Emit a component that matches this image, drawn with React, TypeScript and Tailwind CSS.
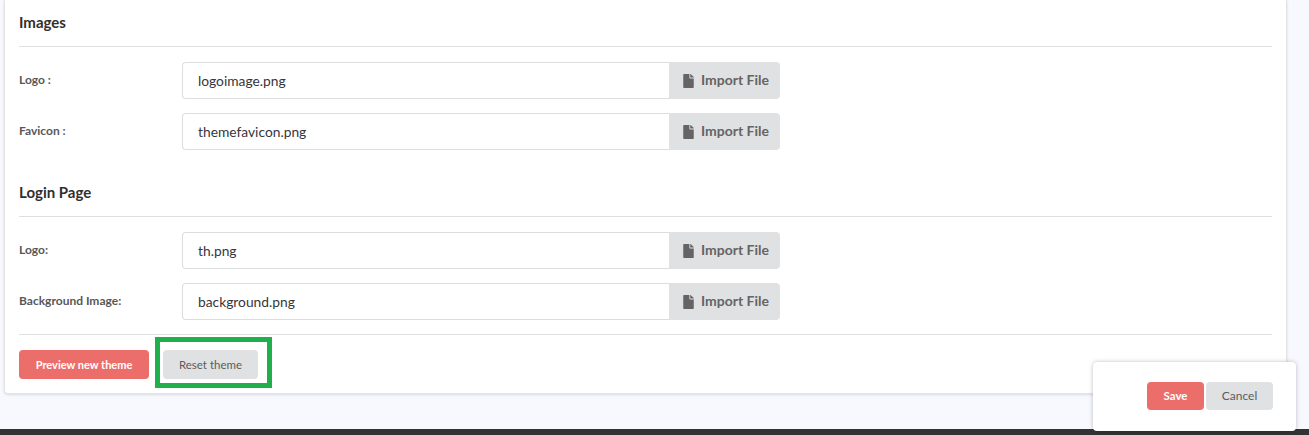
import React from "react";

function FileIcon() {
  return (
    <svg width="11" height="14" viewBox="0 0 384 512" fill="#646464" className="shrink-0">
      <path d="M224 136V0H24C10.700 0 0 10.700 0 24v464c0 13.300 10.700 24 24 24h336c13.300 0 24-10.700 24-24V160H248c-13.200 0-24-10.800-24-24zm160-14.100v6.100H256V0h6.100c6.400 0 12.500 2.500 17 7l97.900 98c4.500 4.500 7 10.600 7 16.900z" />
    </svg>
  );
}

function Row({ label, value, className }: { label: string; value: string; className: string }) {
  return (
    <div className={`flex items-center ${className}`}>
      <label className="w-[163px] shrink-0 text-[12px] font-bold leading-[16px] text-[#585858] -mt-[1px]">{label}</label>
      <div className="flex h-[37px] w-[598px]">
        <div className="flex-1 flex items-center pl-[15px] pt-[2px] border border-r-0 border-[#dcdde0] rounded-l-[4px] bg-white text-[13.8px] text-[#36363c]">
          {value}
        </div>
        <div className="w-[111px] flex items-center gap-[7px] pl-[14px] bg-[#e0e1e3] rounded-r-[4px] text-[14px] font-bold text-[#646464]">
          <FileIcon />
          <span className="-mt-[3px]">Import File</span>
        </div>
      </div>
    </div>
  );
}

export default function App() {
  return (
    <div className="relative h-[435px] w-[1309px] overflow-hidden bg-[#f8f9fe] font-['Lato',sans-serif]">
      <div className="ml-[4px] w-[1283px] h-[394px] bg-white border border-t-0 border-[#e4e4e6] rounded-b-[4px] shadow-[0_1px_3px_rgba(0,0,0,0.12)] pl-[14px] pr-[14px]">
        <h2 className="pt-[13px] h-[47px] border-b border-[#dfdfdf] text-[15px] font-bold leading-[19px] text-[#2f2f2f]">Images</h2>
        <Row label="Logo :" value="logoimage.png" className="mt-[15px]" />
        <Row label="Favicon :" value="themefavicon.png" className="mt-[14px]" />
        <h2 className="mt-[33px] h-[34px] border-b border-[#dfdfdf] text-[15px] font-bold leading-[19px] text-[#2f2f2f]">Login Page</h2>
        <Row label="Logo:" value="th.png" className="mt-[15px]" />
        <Row label="Background Image:" value="background.png" className="mt-[14px]" />
        <div className="mt-[14px] border-t border-[#dfdfdf] flex items-start h-[54px]">
          <button className="mt-[15px] h-[29px] w-[130px] pt-[2px] rounded-[4px] bg-[#ec6e6b] text-white text-[11px] font-bold">Preview new theme</button>
          <div className="ml-[6px] mt-[2px] w-[117px] h-[51px] border-[5px] border-[#1fb04c] pl-[3px] pt-[8px]">
            <button className="block h-[29px] w-[95px] rounded-[4px] bg-[#e0e1e3] text-[#5c5c5c] text-[11.5px]">Reset theme</button>
          </div>
        </div>
      </div>
      <div className="absolute left-0 right-0 top-[429px] h-[6px] bg-[#333333]" />
      <div className="absolute left-[1093px] top-[362px] w-[203px] h-[69px] bg-white rounded-[4px] shadow-[0_0_4px_rgba(0,0,0,0.25)] flex items-start justify-end gap-[2px] pt-[20px] pr-[23px]">
        <button className="h-[28px] w-[57px] rounded-[4px] bg-[#ec6e6b] text-white text-[11.5px] font-bold">Save</button>
        <button className="h-[28px] w-[67px] rounded-[4px] bg-[#e0e1e3] text-[#5c5c5c] text-[12px]">Cancel</button>
      </div>
    </div>
  );
}
